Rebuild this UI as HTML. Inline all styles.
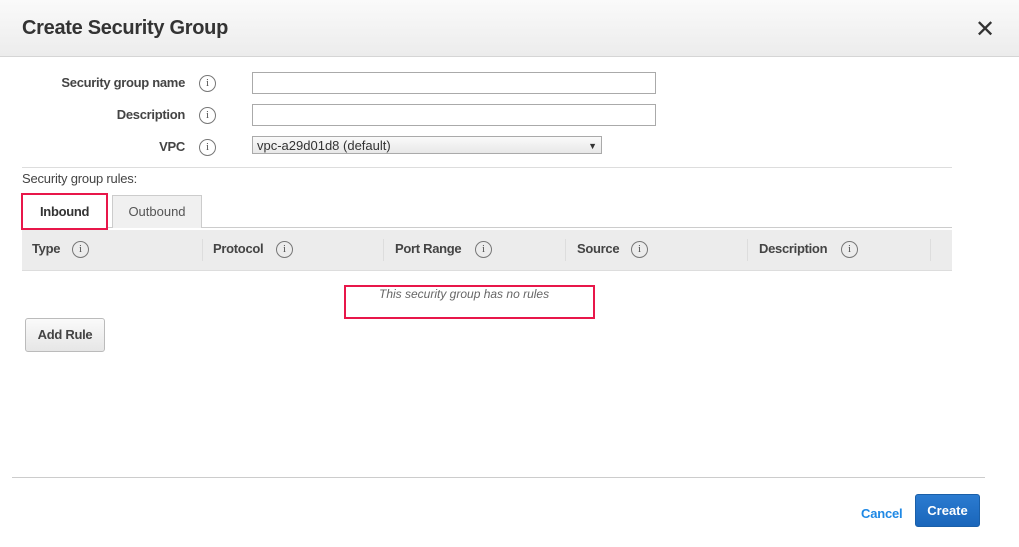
<!DOCTYPE html>
<html><head><style>
body{margin:0;width:1019px;height:547px;background:#fff;font-family:"Liberation Sans",sans-serif;position:relative;overflow:hidden;color:#444}
.a{position:absolute}
.hdr{left:0;top:0;width:1019px;height:56px;background:linear-gradient(#fafafa,#ececec);border-bottom:1px solid #d5d5d5}
.lbl{font-size:13px;font-weight:bold;color:#444;text-align:right;width:185px;left:0;letter-spacing:-0.3px}
.i{width:15px;height:15px;border:1px solid #777;border-radius:50%;font-size:11px;line-height:15px;text-align:center;color:#555;font-family:"Liberation Serif",serif}
.inp{border:1px solid #aaa;height:20px;background:#fff}
.th{font-size:13px;font-weight:bold;color:#444;top:241px;letter-spacing:-0.3px}
.sep{top:239px;width:1px;height:22px;background:#ddd}
</style></head><body>
<div class="a hdr"></div>
<div class="a" style="left:22px;top:17px;font-size:20px;font-weight:bold;color:#333;letter-spacing:-0.3px">Create Security Group</div>
<div class="a" style="left:975px;top:15px;font-size:24px;color:#333">✕</div>

<div class="a lbl" style="top:75px">Security group name</div>
<div class="a i" style="left:199px;top:75px">i</div>
<div class="a inp" style="left:252px;top:72px;width:402px"></div>
<div class="a lbl" style="top:107px">Description</div>
<div class="a i" style="left:199px;top:107px">i</div>
<div class="a inp" style="left:252px;top:104px;width:402px"></div>
<div class="a lbl" style="top:139px">VPC</div>
<div class="a i" style="left:199px;top:139px">i</div>
<div class="a inp" style="left:252px;top:136px;height:18px;background:linear-gradient(#fafafa,#e8e8e8);font-size:13px;line-height:18px;padding-left:4px;box-sizing:border-box;width:350px;color:#333">vpc-a29d01d8 (default)<span style="position:absolute;right:4px;font-size:9px">▼</span></div>

<div class="a" style="left:22px;top:167px;width:930px;height:1px;background:#ddd"></div>
<div class="a" style="left:22px;top:171px;font-size:13px;color:#444;letter-spacing:-0.2px">Security group rules:</div>

<div class="a" style="left:22px;top:227px;width:930px;height:1px;background:#ccc"></div>
<div class="a" style="left:112px;top:195px;width:88px;height:32px;background:#f0f0f0;border:1px solid #ccc;border-bottom:none;font-size:13px;text-align:center;line-height:32px;color:#555">Outbound</div>
<div class="a" style="left:21px;top:193px;width:87px;height:37px;border:2px solid #e8174a;box-sizing:border-box;background:#fff"></div>
<div class="a" style="left:40px;top:204px;font-size:13px;font-weight:bold;color:#333;letter-spacing:-0.3px">Inbound</div>

<div class="a" style="left:22px;top:230px;width:930px;height:40px;background:#ececec;border-bottom:1px solid #ddd"></div>
<div class="a th" style="left:32px">Type</div><div class="a i" style="left:72px;top:241px">i</div>
<div class="a sep" style="left:202px"></div>
<div class="a th" style="left:213px">Protocol</div><div class="a i" style="left:276px;top:241px">i</div>
<div class="a sep" style="left:383px"></div>
<div class="a th" style="left:395px">Port Range</div><div class="a i" style="left:475px;top:241px">i</div>
<div class="a sep" style="left:565px"></div>
<div class="a th" style="left:577px">Source</div><div class="a i" style="left:631px;top:241px">i</div>
<div class="a sep" style="left:747px"></div>
<div class="a th" style="left:759px">Description</div><div class="a i" style="left:841px;top:241px">i</div>
<div class="a sep" style="left:930px"></div>

<div class="a" style="left:344px;top:285px;width:251px;height:34px;border:2px solid #e8174a;box-sizing:border-box"></div>
<div class="a" style="left:379px;top:287px;font-size:12px;font-style:italic;color:#666">This security group has no rules</div>

<div class="a" style="left:25px;top:318px;width:78px;height:32px;border:1px solid #bbb;border-radius:3px;background:linear-gradient(#fafafa,#e6e6e6);font-size:13px;font-weight:bold;text-align:center;line-height:32px;color:#444;letter-spacing:-0.3px">Add Rule</div>

<div class="a" style="left:12px;top:477px;width:973px;height:1px;background:#ccc"></div>
<div class="a" style="left:861px;top:506px;font-size:13px;font-weight:bold;color:#1e88e5;letter-spacing:-0.2px">Cancel</div>
<div class="a" style="left:915px;top:494px;width:65px;height:33px;border:1px solid #1a5fa8;border-radius:3px;background:linear-gradient(#2b7bd0,#1a66bb);color:#fff;font-size:13px;font-weight:bold;text-align:center;line-height:31px;box-sizing:border-box">Create</div>
</body></html>
